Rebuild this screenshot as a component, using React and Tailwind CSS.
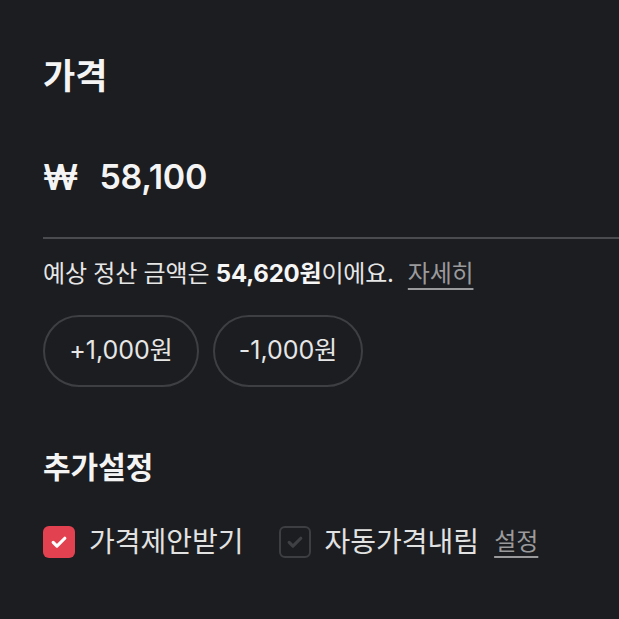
import React, { useState } from 'react';

const FONT = { fontFamily: 'Inter, "Noto Sans CJK KR", "Noto Sans", sans-serif' };

function Check({ on, onClick }) {
  return (
    <button
      onClick={onClick}
      className={
        on
          ? 'w-8 h-8 rounded-md bg-[#e2424f] flex items-center justify-center'
          : 'w-8 h-8 rounded-md border-2 border-[#3d3e41] flex items-center justify-center'
      }
    >
      <svg viewBox="0 0 24 24" className="w-5 h-5" fill="none" stroke={on ? '#ffffff' : '#3f4043'} strokeWidth="3.8" strokeLinecap="round" strokeLinejoin="round">
        <path d="M5 12.5l4.5 4.5L19 7.5" />
      </svg>
    </button>
  );
}

export default function App() {
  const [price, setPrice] = useState(58100);
  const [offer, setOffer] = useState(true);
  const [auto, setAuto] = useState(false);

  return (
    <div className="w-[619px] h-[619px] bg-[#1c1d20] text-[#ececec] overflow-hidden" style={FONT}>
      <div className="pl-[43px] pt-[50px]">
        <h2 className="text-[35px] font-bold text-[#f4f4f4] leading-[52px]">가격</h2>

        <div className="flex items-center gap-[21px] mt-[53px] h-[44px]">
          <span className="text-[35px] font-semibold text-[#f4f4f4] leading-none">₩</span>
          <span className="text-[34px] font-semibold text-[#f4f4f4] leading-none tracking-[-0.3px]">{price.toLocaleString()}</span>
        </div>
        <div className="mt-[38px] h-[2px] bg-[#4a4b4e]" />

        <p className="mt-[17px] text-[24px] leading-[36px] text-[#e6e6e6] tracking-[-0.2px]">
          예상 정산 금액은 <b className="font-bold text-[#f6f6f6]">54,620원</b>이에요.
          <span className="ml-[14px] text-[#9a9a9c] underline underline-offset-[6px] decoration-[1.5px]">자세히</span>
        </p>

        <div className="flex gap-[14px] mt-[23px]">
          <button onClick={() => setPrice(price + 1000)} className="w-[156px] h-[72px] rounded-full border-2 border-[#3e3f42] text-[25px] text-[#e6e6e6]">
            +1,000원
          </button>
          <button onClick={() => setPrice(price - 1000)} className="w-[150px] h-[72px] rounded-full border-2 border-[#3e3f42] text-[25px] text-[#e6e6e6]">
            -1,000원
          </button>
        </div>

        <h3 className="mt-[58px] text-[30px] font-bold text-[#f4f4f4] leading-[44px]">추가설정</h3>

        <div className="flex items-center mt-[37px]">
          <Check on={offer} onClick={() => setOffer(!offer)} />
          <span className="ml-[14px] text-[28px] text-[#e2e2e2] leading-none">가격제안받기</span>
          <div className="ml-[35px]">
            <Check on={auto} onClick={() => setAuto(!auto)} />
          </div>
          <span className="ml-[14px] text-[28px] text-[#e2e2e2] leading-none">자동가격내림</span>
          <span className="ml-[15px] text-[24px] text-[#9a9a9c] underline underline-offset-[6px] decoration-[1.5px] leading-none">설정</span>
        </div>
      </div>
    </div>
  );
}
